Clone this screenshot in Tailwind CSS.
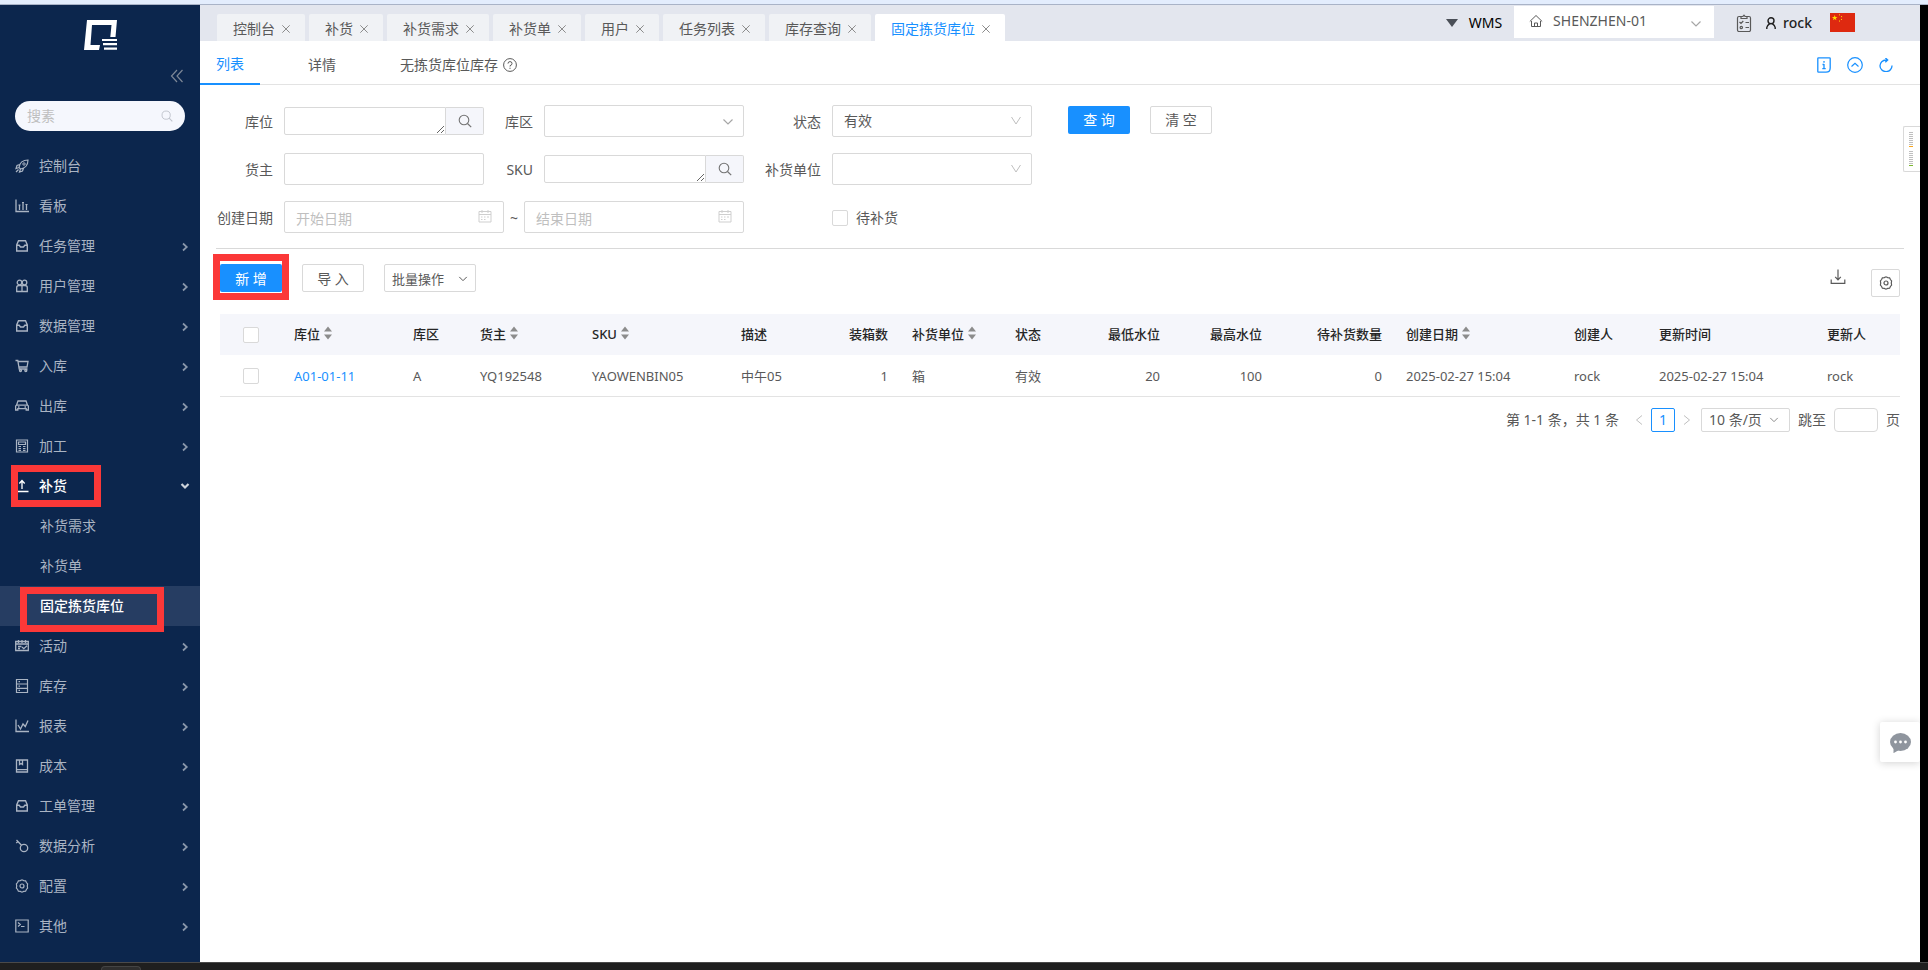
<!DOCTYPE html>
<html lang="zh-CN">
<head>
<meta charset="utf-8">
<title>固定拣货库位</title>
<script src="https://cdn.jsdelivr.net/npm/@tailwindcss/browser@4"></script>
</head>
<body class="flex min-h-screen flex-col bg-black font-['Noto_Sans','Noto_Sans_CJK_SC',sans-serif] text-sm text-[#595959]">
<svg class="hidden" fill="none" stroke="currentColor">
  <symbol id="chev-right" viewBox="0 0 10 10"><path d="M3 1.500L6.800 5 3 8.500" stroke-width="1.700"/></symbol>
  <symbol id="chev-down" viewBox="0 0 12 12"><path d="M1.500 3.500L6 8l4.500-4.500" stroke-width="1.200"/></symbol>
  <symbol id="chev-deep" viewBox="0 0 12 12"><path d="M1.500 2L6 9l4.500-7" stroke-width="1"/></symbol>
  <symbol id="close" viewBox="0 0 8 8"><path d="M.3.3l7.400 7.400M7.700.3L.3 7.700" stroke-width="1"/></symbol>
  <symbol id="search" viewBox="0 0 14 14"><circle cx="6" cy="6" r="4.800" stroke-width="1.100"/><path d="M9.500 9.500l3.700 3.700" stroke-width="1.200"/></symbol>
  <symbol id="calendar" viewBox="0 0 14 14"><path d="M1 2.500h12v10.500H1zM4 1v3M10 1v3M1 5.500h12" /><path d="M3 8h1.500M6 8h1.500M9 8h2M3 10.500h1.500M6 10.500h1.500"/></symbol>
  <symbol id="inbox" viewBox="0 0 14 14"><path d="M3.500 1.800h7L12.300 6v6H1.700V6zM1.700 6.300h2.500L5.500 8h3l1.300-1.700h2.500" stroke-width="1.400"/></symbol>
  <symbol id="sort" viewBox="0 0 8 14"><path d="M4 .5l4 5H0zM4 13.500l4-5H0z" fill="#8c8c8c" stroke="none"/></symbol>
  <symbol id="gear" viewBox="0 0 14 14"><path d="M5.300 1.600L7 .8l1.700.8 1.900.2.800 1.700 1.200 1.500-.3 2 .3 2-1.200 1.500-.8 1.700-1.900.2L7 13.200l-1.700-.8-1.900-.2-.8-1.700L1.400 9l.3-2-.3-2 1.200-1.500.8-1.700z" stroke-width="1.200"/><circle cx="7" cy="7" r="2" stroke-width="1.200"/></symbol>
</svg>

<div class="h-[5px] border-b border-[#a9b3c7] bg-[#e3edfd]"></div>

<div class="flex flex-1 pr-2">
  <aside class="relative w-[200px] shrink-0 bg-[#0c264d] pb-4 text-[#aab4c3]">
    <div class="flex h-24 flex-col">
      <svg class="mx-auto mt-[15px] h-[30px] w-[33px]" viewBox="0 0 33 30"><path d="M3 0h30l-1.500 17h-5.200L27.500 5H8L6.500 25H16l-1 5H0z" fill="#fff"/><path d="M18 20h15M19 24.200h14M20 28.700h13" stroke="#fff" stroke-width="2.200"/></svg>
      <button class="mt-[19px] mr-4 self-end" aria-label="收起菜单"><svg class="size-3.5 text-[#7d8796]" viewBox="0 0 14 14" fill="none" stroke="currentColor" stroke-width="1.200"><path d="M7 1L1.500 7 7 13M12.500 1L7 7l5.500 6"/></svg></button>
    </div>
    <label class="mx-[15px] mb-[15px] flex h-[30px] items-center rounded-full bg-[#f5f7fd] px-3">
      <input type="text" aria-label="搜索菜单" placeholder="搜素" class="w-full min-w-0 bg-transparent outline-none placeholder:text-[#bfbfbf]">
      <svg class="size-3 shrink-0 text-[#bfc3cc]" fill="none" stroke="currentColor"><use href="#search"/></svg>
    </label>
    <nav class="*:flex *:h-10 *:items-center *:pr-2.5 *:pl-[15px] [&_span]:ml-2.5 [&_span]:flex-1 [&>a>svg:first-child]:size-3.5 [&>a>svg:last-child]:mt-0.5 [&>a>svg:last-child]:size-2.5 [&>a>svg:last-child]:opacity-80 [&_svg]:shrink-0 [&_svg]:fill-none [&_svg]:stroke-current">
      <a href="#"><svg viewBox="0 0 14 14" class="mt-0!" opacity="1"><path d="M4 8.500C4.500 4 8 1 13 1c0 5-3 8.500-7.500 9zM4.800 5.500L2 6.500 1 9.500l3-1M8.500 9.200L7.500 12l-3 1 1-3M3.500 10.500L1 13" stroke-width="1.200"/><circle cx="9" cy="5" r="1.200"/></svg><span>控制台</span></a>
      <a href="#"><svg viewBox="0 0 14 14"><path d="M1 .5V12.500h13M4.500 11V6M8 11V3M11.500 11V5" stroke-width="1.300"/><path d="M3.500 6h2M7 3.500h2M10.500 5.500h2"/></svg><span>看板</span></a>
      <a href="#"><svg><use href="#inbox"/></svg><span>任务管理</span><svg><use href="#chev-right"/></svg></a>
      <a href="#"><svg viewBox="0 0 14 14" stroke-width="1.300"><circle cx="4.500" cy="3.500" r="2.300"/><circle cx="9.500" cy="3.500" r="2.300"/><path d="M1.700 12.500V8.500q0-2 2.500-2H7v6zM12.300 12.500V8.500q0-2-2.500-2H7v6z"/></svg><span>用户管理</span><svg><use href="#chev-right"/></svg></a>
      <a href="#"><svg><use href="#inbox"/></svg><span>数据管理</span><svg><use href="#chev-right"/></svg></a>
      <a href="#"><svg viewBox="0 0 14 14" stroke-width="1.300"><path d="M.5 1.500h2.300l1.400 8.500h8.300M3 2.500h10l-1 5.500H4"/><circle cx="5.500" cy="11.500" r="1"/><circle cx="10.800" cy="11.500" r="1"/></svg><span>入库</span><svg><use href="#chev-right"/></svg></a>
      <a href="#"><svg viewBox="0 0 14 14" stroke-width="1.300"><path d="M3 2h8l1.500 4.200L13.400 7v4h-2.200V9.700H2.800V11H.6V7l.9-.8zM1.500 6.200h11M3 8h1.500M9.500 8H11"/></svg><span>出库</span><svg><use href="#chev-right"/></svg></a>
      <a href="#"><svg viewBox="0 0 14 14" stroke-width="1.200"><path d="M1.500 1h11v12h-11zM3.500 3h7v2.500h-7zM3.500 7.500h2.500M8 7.500h2.500M3.500 9.500h2.500M8 9.500h2.500M3.500 11.300h2.500M8 11.300h2.500"/></svg><span>加工</span><svg><use href="#chev-right"/></svg></a>
      <a href="#" class="font-medium text-white"><svg viewBox="0 0 14 14" stroke-width="1.300"><path d="M7 10V2M4.300 4.500L7 1.500l2.700 3M.5 12.500h13"/></svg><span>补货</span><svg viewBox="0 0 10 10"><path d="M1.500 2L5 5.500 8.500 2" stroke-width="2.200"/></svg></a>
      <a href="#"><span class="pl-[15px]">补货需求</span></a>
      <a href="#"><span class="pl-[15px]">补货单</span></a>
      <a href="#" class="bg-[#263d62] font-medium text-white"><span class="pl-[15px]">固定拣货库位</span></a>
      <a href="#"><svg viewBox="0 0 14 14" stroke-width="1.300"><path d="M.7 2.500h12.600v9H.7zM.7 5h12.600M3.500 1v3M7 1v3M10.500 1v3M3 7.500h3.500M3 9.500h2M7 8l1.800 1.700L12 6.800"/></svg><span>活动</span><svg><use href="#chev-right"/></svg></a>
      <a href="#"><svg viewBox="0 0 14 14" stroke-width="1.200"><path d="M1.500.5h11v13h-11zM1.500 5h11M1.500 9.300h11M3.500 2.700h1.500M3.500 7.200h1.500M3.500 11.400h1.500"/></svg><span>库存</span><svg><use href="#chev-right"/></svg></a>
      <a href="#"><svg viewBox="0 0 14 14" stroke-width="1.300"><path d="M1 .5v12h13M3 6l2.500 4 2.500-5 2.300 2.500L13 1.500"/></svg><span>报表</span><svg><use href="#chev-right"/></svg></a>
      <a href="#"><svg viewBox="0 0 14 14" stroke-width="1.300"><path d="M1.500 1h11v12h-11zM1.500 10.700h11M4.500 1v4.500L6 4.500l1.500 1V1"/></svg><span>成本</span><svg><use href="#chev-right"/></svg></a>
      <a href="#"><svg><use href="#inbox"/></svg><span>工单管理</span><svg><use href="#chev-right"/></svg></a>
      <a href="#"><svg viewBox="0 0 14 14" stroke-width="1.300"><circle cx="9" cy="9" r="3.700"/><path d="M6.500 6.300L1.500 1M1.200 4l2-1.500"/></svg><span>数据分析</span><svg><use href="#chev-right"/></svg></a>
      <a href="#"><svg><use href="#gear"/></svg><span>配置</span><svg><use href="#chev-right"/></svg></a>
      <a href="#"><svg viewBox="0 0 14 14" stroke-width="1.200"><path d="M.8 1h12.400v12H.8zM3 3.500l2.300 2L3 7.500M6 7.500h3.500"/></svg><span>其他</span><svg><use href="#chev-right"/></svg></a>
    </nav>
    <div class="pointer-events-none absolute top-[460px] left-[11px] h-[42px] w-[90px] border-7 border-[#fb3838]"></div>
    <div class="pointer-events-none absolute top-[582px] left-5 h-[45px] w-36 border-7 border-[#fb3838]"></div>
  </aside>

  <div class="relative min-w-0 flex-1 bg-white">
    <header class="flex h-9 bg-[#e3e6ee] pl-[17px]">
      <nav class="mt-[9px] flex gap-1 *:flex *:items-center *:rounded-t-xs *:bg-[#f0f2f5] *:pt-0.5 *:pr-[15px] *:pl-4 [&_button]:ml-[7px] [&_button]:text-[#8c8c8c] [&_svg]:size-2 [&_svg]:overflow-visible [&_svg]:fill-none [&_svg]:stroke-current">
        <div><a href="#">控制台</a><button aria-label="关闭"><svg><use href="#close"/></svg></button></div>
        <div><a href="#">补货</a><button aria-label="关闭"><svg><use href="#close"/></svg></button></div>
        <div><a href="#">补货需求</a><button aria-label="关闭"><svg><use href="#close"/></svg></button></div>
        <div><a href="#">补货单</a><button aria-label="关闭"><svg><use href="#close"/></svg></button></div>
        <div><a href="#">用户</a><button aria-label="关闭"><svg><use href="#close"/></svg></button></div>
        <div><a href="#">任务列表</a><button aria-label="关闭"><svg><use href="#close"/></svg></button></div>
        <div><a href="#">库存查询</a><button aria-label="关闭"><svg><use href="#close"/></svg></button></div>
        <div class="bg-white!"><a href="#" class="text-[#1890ff]">固定拣货库位</a><button aria-label="关闭"><svg><use href="#close"/></svg></button></div>
      </nav>
      <div class="ml-auto flex items-center pr-[65px]">
        <button class="mr-3 flex items-center gap-[11px] text-black"><svg class="h-2 w-3" viewBox="0 0 12 8"><path d="M0 0h12L6 8z" fill="#4a4f57"/></svg>WMS</button>
        <label class="relative mb-0.5 block h-8 w-[200px] bg-white">
          <svg class="absolute top-2 left-[15px] size-3.5" viewBox="0 0 14 14" fill="none" stroke="currentColor"><path d="M.8 7.500L7 1.500l6.200 6M2.500 7v5.500h9V7M5.500 12.500V9h3v3.500"/></svg>
          <select aria-label="仓库" class="size-full appearance-none bg-transparent pb-0.5 pl-[39px] outline-none"><option>SHENZHEN-01</option></select>
          <svg class="pointer-events-none absolute top-3 right-3 size-3 text-[#a6a6a6]" fill="none" stroke="currentColor"><use href="#chev-down"/></svg>
        </label>
        <button class="ml-[22px]" aria-label="任务清单"><svg class="h-[18px] w-4" viewBox="0 0 16 18" fill="none" stroke="#595959" stroke-width="1.200"><rect x="1.500" y="2.500" width="13" height="15" rx="1.500"/><path d="M5 4.500V2.500h2Q8-.5 9 2.500h2v2z" fill="#e3e6ee"/><path d="M3.500 8l1.500 1.500L7.300 7M9.500 8.500H13M9.500 13.500H13"/><circle cx="5.300" cy="13.500" r="1.200"/></svg></button>
        <button class="ml-3.5 flex items-center gap-[7px] font-medium text-[#1f1f1f]"><svg class="h-3 w-2.5" viewBox="0 0 10 12" fill="none" stroke="currentColor" stroke-width="1.400"><circle cx="5" cy="3.800" r="3"/><path d="M.8 12V10.500Q1 8.500 3.700 6.600M9.200 12V10.500Q9 8.500 6.300 6.600"/></svg>rock</button>
        <button class="mb-0.5 ml-[18px]" aria-label="中文"><svg class="h-[19px] w-[25px]" viewBox="0 0 25 19"><path d="M0 0h25v19H0z" fill="#de2910"/><path d="M4.700 2l.7 2h2.100L5.800 5.300l.6 2-1.700-1.200L3 7.300l.6-2L1.900 4H4z" fill="#ffde00"/><path d="M9 1.500l1 .7M11 3.500l1.100.3M11 6.300l1 .2M9 8.300l1-.5" stroke="#ffde00"/></svg></button>
      </div>
    </header>

    <div class="flex h-11 items-stretch border-b border-[#e3e3e3]">
      <nav class="flex gap-8 *:flex *:items-center *:px-4 *:pt-1">
        <a href="#" class="-mb-px border-b-2 border-[#1890ff] text-[#1890ff]">列表</a>
        <a href="#">详情</a>
        <a href="#" class="gap-[5px]">无拣货库位库存<svg class="size-3.5" viewBox="0 0 14 14" fill="none" stroke="currentColor"><circle cx="7" cy="7" r="6.400"/><path d="M5 5.600q0-2 2-2t2 1.800-2 2.300v.8M7 9.700v1.200"/></svg></a>
      </nav>
      <div class="mt-1 ml-auto flex items-center gap-4 pr-[27px] text-[#1890ff]">
        <button aria-label="说明"><svg class="h-4 w-3.5" viewBox="0 0 14 16" fill="none" stroke="currentColor" stroke-width="1.300"><path d="M1.500.8h11q.7 0 .7.700v9.500q0 4.200-4.200 4.200H1.500q-.7 0-.7-.7V1.500q0-.7.7-.7z"/><path d="M7 4v1.700M7 7v5M5.500 7.500H7M5.300 11.700h3.400" stroke-width="1.300"/></svg></button>
        <button aria-label="收起"><svg class="size-4" viewBox="0 0 16 16" fill="none" stroke="currentColor" stroke-width="1.200"><circle cx="8" cy="8" r="7.300"/><path d="M4.500 9.500L8 6.300l3.500 3.200"/></svg></button>
        <button aria-label="刷新"><svg class="size-3.5" viewBox="0 0 14 14" fill="none" stroke="currentColor" stroke-width="1.300"><path d="M13 7.500A6 5.800 0 1 1 7 2h1.500M6.300-.2l2.400 2.200-2.400 2.200"/></svg></button>
      </div>
    </div>

    <main class="px-5">
      <form class="-mx-1 grid grid-cols-[57px_200px_38px_200px_66px_200px_1fr] gap-x-[11px] gap-y-4 border-b border-[#d9d9d9] pt-5 pb-[15px] *:h-8 *:content-center [&>label]:pt-0.5">
        <label for="loc" class="text-right">库位</label>
        <div class="flex items-center"><textarea id="loc" rows="1" class="h-7 w-[162px] resize rounded-l-xs border border-[#d9d9d9]"></textarea><button type="button" aria-label="选择库位" class="flex h-7 flex-1 items-center justify-center rounded-r-xs border border-l-0 border-[#d9d9d9] bg-[#f5f6fb]"><svg class="size-3.5 text-[#737373]" fill="none" stroke="currentColor"><use href="#search"/></svg></button></div>
        <label for="area" class="text-right">库区</label>
        <div class="relative"><select id="area" class="h-8 w-full appearance-none rounded-xs border border-[#d9d9d9] bg-white px-[11px]"><option></option></select><svg class="pointer-events-none absolute top-[11px] right-2.5 size-3 text-[#a6a6a6]" fill="none" stroke="currentColor"><use href="#chev-down"/></svg></div>
        <label for="state" class="text-right">状态</label>
        <div class="relative"><select id="state" class="h-8 w-full appearance-none rounded-xs border border-[#d9d9d9] bg-white px-[11px]"><option>有效</option></select><svg class="pointer-events-none absolute top-2.5 right-2.5 size-3 text-[#bfbfbf]" fill="none" stroke="currentColor"><use href="#chev-deep"/></svg></div>
        <div class="flex gap-5 pt-px pl-[25px]">
          <button type="button" class="h-7 w-[62px] rounded-xs bg-[#1890ff] text-white">查 询</button>
          <button type="button" class="h-7 w-[62px] rounded-xs border border-[#d9d9d9] bg-white">清 空</button>
        </div>

        <label for="owner" class="text-right">货主</label>
        <input id="owner" type="text" class="rounded-xs border border-[#d9d9d9] px-[11px]">
        <label for="sku" class="text-right">SKU</label>
        <div class="flex items-center"><textarea id="sku" rows="1" class="h-7 w-[162px] resize rounded-l-xs border border-[#d9d9d9]"></textarea><button type="button" aria-label="选择SKU" class="flex h-7 flex-1 items-center justify-center rounded-r-xs border border-l-0 border-[#d9d9d9] bg-[#f5f6fb]"><svg class="size-3.5 text-[#737373]" fill="none" stroke="currentColor"><use href="#search"/></svg></button></div>
        <label for="unit" class="text-right">补货单位</label>
        <div class="relative"><select id="unit" class="h-8 w-full appearance-none rounded-xs border border-[#d9d9d9] bg-white px-[11px]"><option></option></select><svg class="pointer-events-none absolute top-2.5 right-2.5 size-3 text-[#bfbfbf]" fill="none" stroke="currentColor"><use href="#chev-deep"/></svg></div>
        <div></div>

        <label for="from" class="text-right">创建日期</label>
        <div class="col-span-3 flex items-center">
          <div class="relative flex-1"><input id="from" type="text" placeholder="开始日期" class="h-8 w-full rounded-xs border border-[#d9d9d9] px-[11px] pt-0.5 placeholder:text-[#bfbfbf]"><svg class="absolute top-2 right-3 size-3.5 text-[#cfcfcf]" fill="none" stroke="currentColor"><use href="#calendar"/></svg></div>
          <span class="w-5 pt-0.5 text-center">~</span>
          <div class="relative flex-1"><input type="text" aria-label="结束日期" placeholder="结束日期" class="h-8 w-full rounded-xs border border-[#d9d9d9] px-[11px] pt-0.5 placeholder:text-[#bfbfbf]"><svg class="absolute top-2 right-3 size-3.5 text-[#cfcfcf]" fill="none" stroke="currentColor"><use href="#calendar"/></svg></div>
        </div>
        <div></div>
        <label class="flex items-center gap-2"><input type="checkbox" class="size-4 appearance-none rounded-xs border border-[#d9d9d9] bg-white">待补货</label>
      </form>

      <div class="flex h-[65px] items-start gap-5 pt-[15px]">
        <div class="relative">
          <button class="h-7 w-[62px] rounded-xs bg-[#1890ff] pt-0.5 text-white">新 增</button>
          <div class="pointer-events-none absolute -top-2.5 -left-[7px] h-[46px] w-[76px] border-7 border-[#fb3838]"></div>
        </div>
        <button class="h-7 w-[62px] rounded-xs border border-[#d9d9d9] bg-white pt-0.5">导 入</button>
        <button class="flex h-7 w-[92px] items-center justify-between rounded-xs border border-[#d9d9d9] bg-white px-[7px] pt-0.5 text-[13px]">批量操作<svg class="size-2.5" fill="none" stroke="currentColor"><use href="#chev-down"/></svg></button>
        <button class="mt-[5px] mr-[5px] ml-auto" aria-label="下载"><svg class="size-4" viewBox="0 0 16 16" fill="none" stroke="currentColor" stroke-width="1.200"><path d="M8 .5v10M5.200 7.800L8 10.800l2.800-3M1.200 10.500v3.800h13.600v-3.800"/></svg></button>
        <button class="mt-[5px] flex h-7 w-[29px] items-center justify-center rounded-xs border border-[#d9d9d9]" aria-label="列设置"><svg class="size-3.5" fill="none" stroke="currentColor"><use href="#gear"/></svg></button>
      </div>

      <table class="w-full table-fixed text-left text-[13px] [&_svg]:ml-1 [&_svg]:inline [&_svg]:h-3.5 [&_svg]:w-2 [&_svg]:align-[-1px] [&_td]:px-3 [&_td]:pt-0.5 [&_th]:px-3 [&_th]:font-medium [&_th]:whitespace-nowrap">
        <colgroup><col class="w-[62px]"><col class="w-[119px]"><col class="w-[67px]"><col class="w-[112px]"><col class="w-[149px]"><col class="w-[108px]"><col class="w-[63px]"><col class="w-[103px]"><col class="w-[67px]"><col class="w-[102px]"><col class="w-[102px]"><col class="w-[120px]"><col class="w-[168px]"><col class="w-[85px]"><col class="w-[168px]"><col class="w-[85px]"></colgroup>
        <thead><tr class="h-[41px] bg-[#f5f6fb] text-[#262626]">
          <th><input type="checkbox" aria-label="全选" class="ml-[11px] block size-4 appearance-none rounded-xs border border-[#d9d9d9] bg-white"></th>
          <th>库位<svg><use href="#sort"/></svg></th><th>库区</th><th>货主<svg><use href="#sort"/></svg></th><th>SKU<svg><use href="#sort"/></svg></th><th>描述</th><th class="text-right">装箱数</th><th>补货单位<svg><use href="#sort"/></svg></th><th>状态</th><th class="text-right">最低水位</th><th class="text-right">最高水位</th><th class="text-right">待补货数量</th><th>创建日期<svg><use href="#sort"/></svg></th><th>创建人</th><th>更新时间</th><th>更新人</th>
        </tr></thead>
        <tbody><tr class="h-[41px] border-b border-[#e3e3e3]">
          <td><input type="checkbox" aria-label="选择 A01-01-11" class="ml-[11px] block size-4 appearance-none rounded-xs border border-[#d9d9d9] bg-white"></td>
          <td><a href="#" class="text-[#1890ff]">A01-01-11</a></td><td>A</td><td>YQ192548</td><td>YAOWENBIN05</td><td>中午05</td><td class="text-right">1</td><td>箱</td><td>有效</td><td class="text-right">20</td><td class="text-right">100</td><td class="text-right">0</td><td>2025-02-27 15:04</td><td>rock</td><td>2025-02-27 15:04</td><td>rock</td>
        </tr></tbody>
      </table>

      <div class="mt-[11px] flex h-6 items-center justify-end">
        <span class="mr-4">第 1-1 条，共 1 条</span>
        <button aria-label="上一页" class="mr-2"><svg class="h-2.5 w-2" viewBox="0 0 8 10" fill="none" stroke="#bfbfbf"><path d="M7 .5L1.500 5 7 9.500"/></svg></button>
        <button class="size-6 rounded-xs border border-[#1890ff] text-[#1890ff] leading-none">1</button>
        <button aria-label="下一页" class="mr-2.5 ml-2"><svg class="h-2.5 w-2" viewBox="0 0 8 10" fill="none" stroke="#bfbfbf"><path d="M1 .5L6.500 5 1 9.500"/></svg></button>
        <div class="relative"><select aria-label="每页条数" class="block h-6 w-[89px] appearance-none rounded-xs border border-[#d9d9d9] bg-white pl-[7px]"><option>10 条/页</option></select><svg class="pointer-events-none absolute top-[7px] right-[11px] size-2.5 text-[#8c8c8c]" fill="none" stroke="currentColor"><use href="#chev-down"/></svg></div>
        <label class="ml-2 flex items-center gap-2">跳至<input type="text" class="h-6 w-11 rounded-sm border border-[#d9d9d9] px-1"><span>页</span></label>
      </div>
    </main>

    <div class="absolute top-[121px] right-0 flex h-[46px] w-[17px] flex-col gap-1 rounded-l-xs border border-r-0 border-[#d9d9d9] bg-white py-[5px] pl-[5px]">
      <svg class="h-[15px] w-1" viewBox="0 0 4 15"><path d="M2 0v14" stroke="#bfbfbf" stroke-width="4" stroke-dasharray="1 1"/><path d="M0 14h4v1H0z" fill="#faa61a"/></svg>
      <svg class="h-[15px] w-1" viewBox="0 0 4 15"><path d="M2 0v14" stroke="#bfbfbf" stroke-width="4" stroke-dasharray="1 1"/><path d="M0 14h4v1H0z" fill="#7cb82f"/></svg>
    </div>
    <button aria-label="消息" class="absolute top-[717px] right-0 flex size-10 items-center justify-center rounded-xs bg-white pt-0.5 shadow-[0_1px_8px_rgba(0,0,0,0.18)]"><svg class="h-5 w-[21px]" viewBox="0 0 21 20"><ellipse cx="10.500" cy="9" rx="10.500" ry="9" fill="#8f959e"/><path d="M3.500 14v6.200l5-3z" fill="#8f959e"/><circle cx="5.500" cy="9" r="1.400" fill="#fff"/><circle cx="10.500" cy="9" r="1.400" fill="#fff"/><circle cx="15.500" cy="9" r="1.400" fill="#fff"/></svg></button>
  </div>
</div>

<footer class="h-2 border-t border-[#4a4a4a] bg-[#1f1f1f] pt-[3px]"><div class="ml-[101px] h-1 w-10 rounded-t-sm border border-b-0 border-[#444] bg-[#2e2e2e]"></div></footer>
</body>
</html>
